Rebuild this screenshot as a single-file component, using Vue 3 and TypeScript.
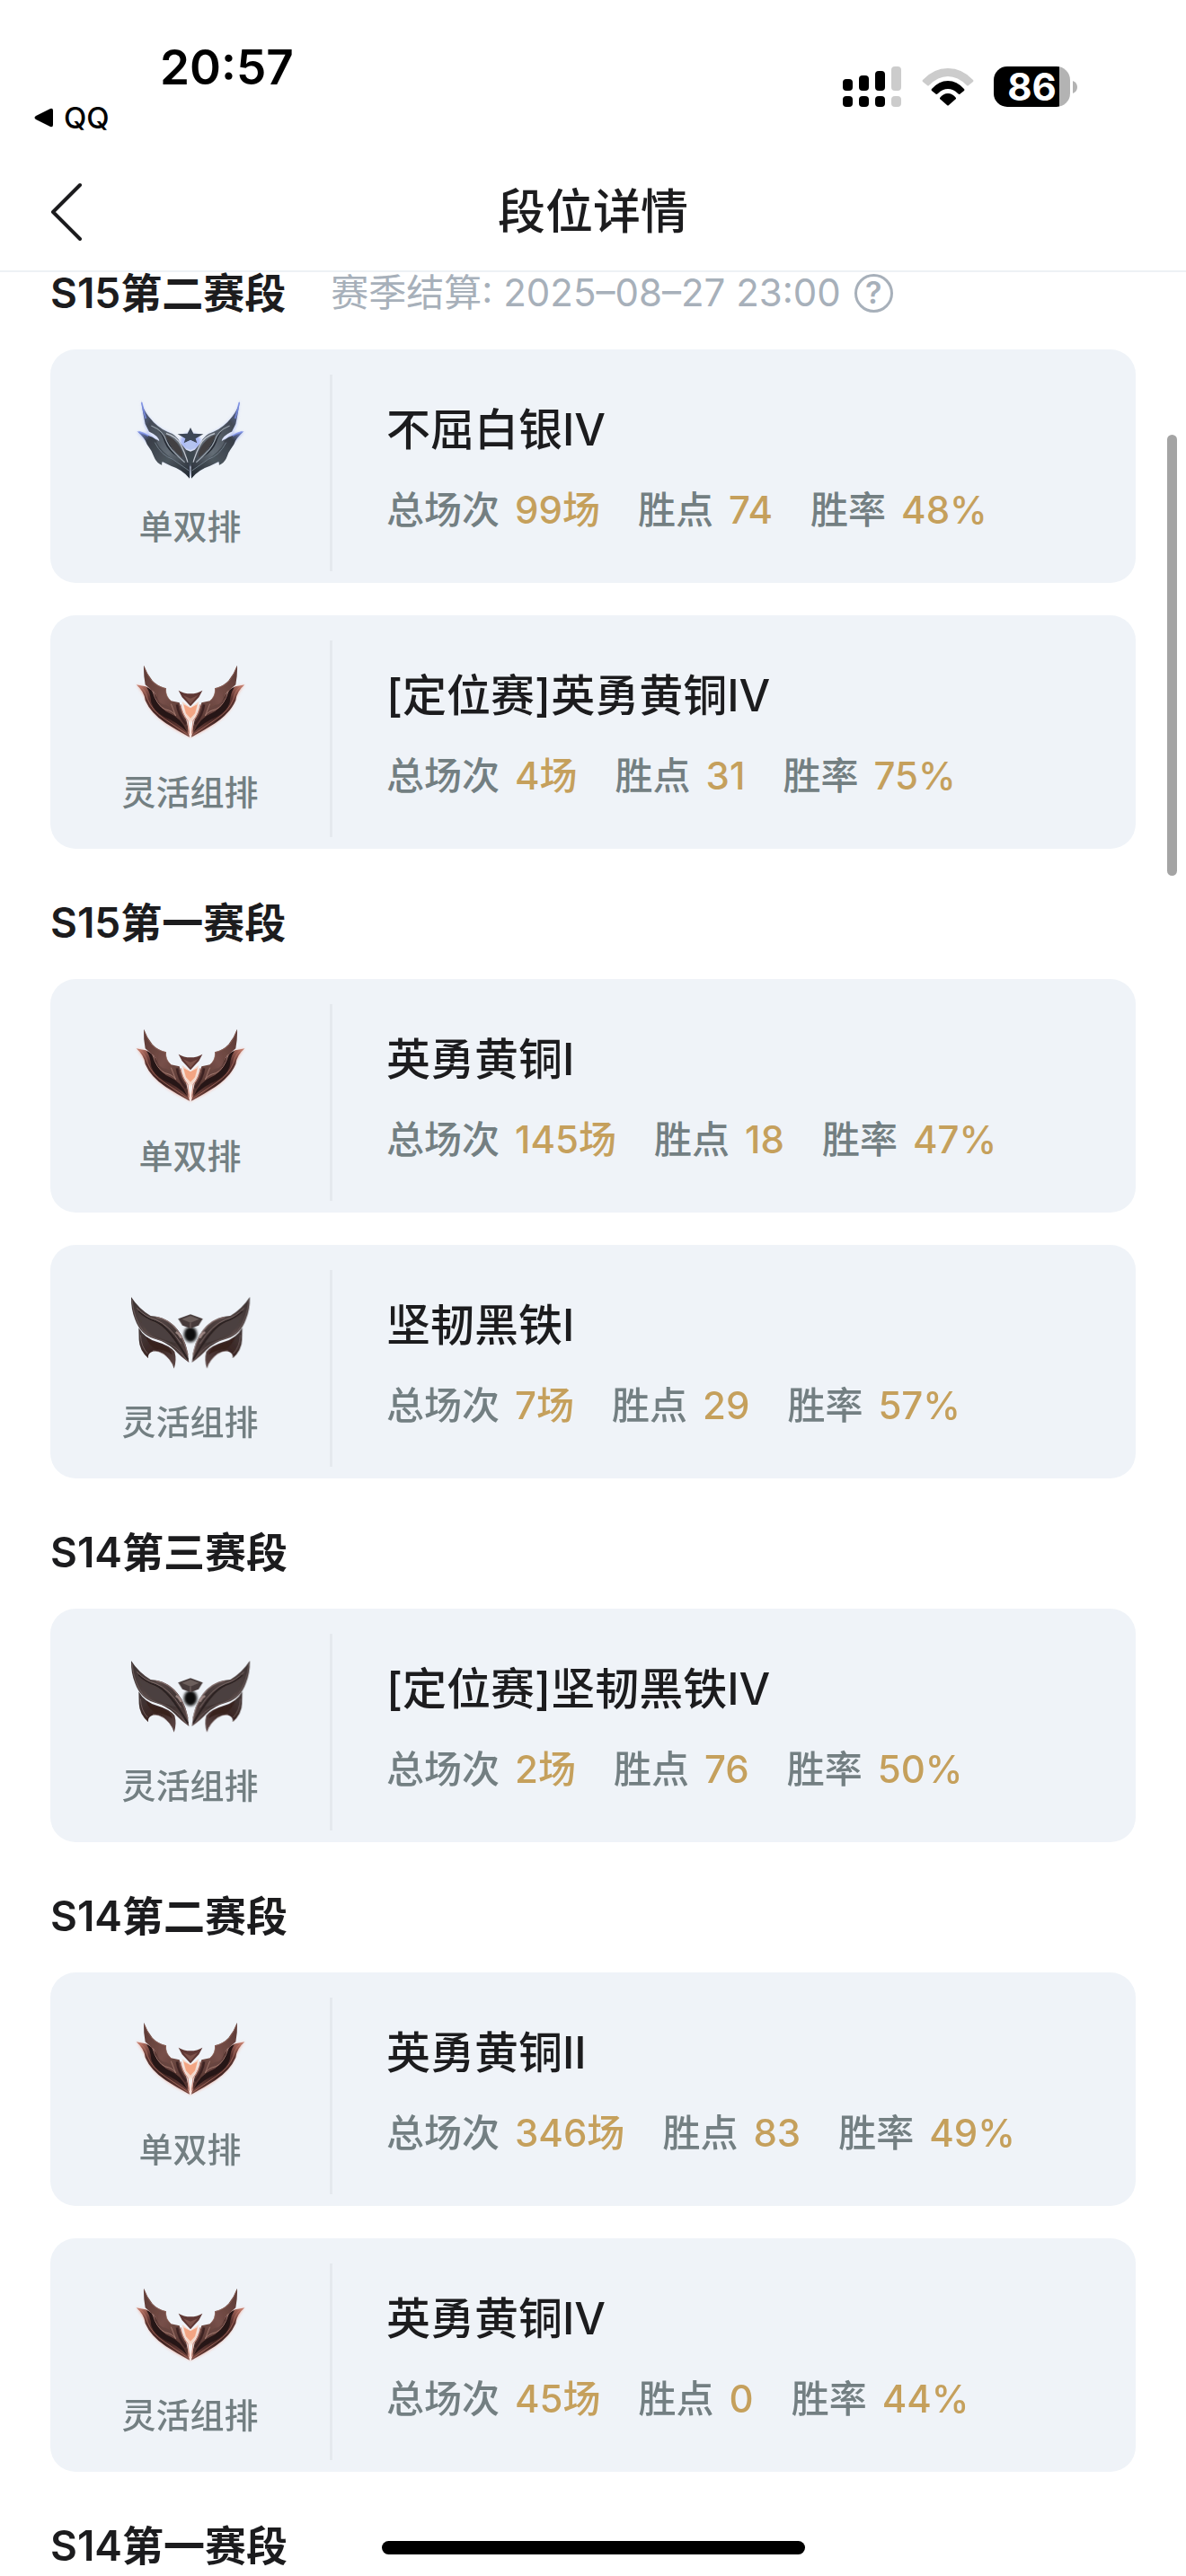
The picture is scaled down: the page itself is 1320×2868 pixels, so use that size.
<script setup lang="ts">
type Tier = 'silver' | 'bronze' | 'iron'

interface RankRecord {
  tier: Tier
  queue: string
  rank: string
  games: number
  points: number
  winRate: number
}

interface Season {
  name: string
  settledAt?: string
  records: RankRecord[]
}

const SOLO = '单双排'
const FLEX = '灵活组排'

const seasons: Season[] = [
  {
    name: 'S15第二赛段',
    settledAt: '2025–08–27 23:00',
    records: [
      { tier: 'silver', queue: SOLO, rank: '不屈白银IV', games: 99, points: 74, winRate: 48 },
      { tier: 'bronze', queue: FLEX, rank: '[定位赛]英勇黄铜IV', games: 4, points: 31, winRate: 75 },
    ],
  },
  {
    name: 'S15第一赛段',
    records: [
      { tier: 'bronze', queue: SOLO, rank: '英勇黄铜I', games: 145, points: 18, winRate: 47 },
      { tier: 'iron', queue: FLEX, rank: '坚韧黑铁I', games: 7, points: 29, winRate: 57 },
    ],
  },
  {
    name: 'S14第三赛段',
    records: [
      { tier: 'iron', queue: FLEX, rank: '[定位赛]坚韧黑铁IV', games: 2, points: 76, winRate: 50 },
    ],
  },
  {
    name: 'S14第二赛段',
    records: [
      { tier: 'bronze', queue: SOLO, rank: '英勇黄铜II', games: 346, points: 83, winRate: 49 },
      { tier: 'bronze', queue: FLEX, rank: '英勇黄铜IV', games: 45, points: 0, winRate: 44 },
    ],
  },
  { name: 'S14第一赛段', records: [] },
]
</script>

<template>
  <div class="page">
    <!-- Emblem artwork: each half is drawn once and mirrored -->
    <svg class="defs" width="0" height="0" aria-hidden="true">
      <defs>
        <filter id="soft" x="-10%" y="-10%" width="120%" height="120%"><feGaussianBlur stdDeviation="1.8" /></filter>
        <filter id="glow" x="-30%" y="-30%" width="160%" height="160%"><feGaussianBlur stdDeviation="5" /></filter>
        <linearGradient id="silver-wing" x1="0" y1="0" x2="1" y2="1">
          <stop offset="0" stop-color="#6878b8" /><stop offset="0.25" stop-color="#434a56" />
          <stop offset="0.65" stop-color="#646d76" /><stop offset="1" stop-color="#2a3039" />
        </linearGradient>
        <linearGradient id="silver-lower" x1="0" y1="0" x2="1" y2="1">
          <stop offset="0" stop-color="#7f93e6" /><stop offset="0.2" stop-color="#383e48" />
          <stop offset="0.6" stop-color="#4c555d" /><stop offset="1" stop-color="#20262f" />
        </linearGradient>
        <linearGradient id="bronze-wing" x1="0" y1="0" x2="1" y2="1">
          <stop offset="0" stop-color="#5a3733" /><stop offset="0.45" stop-color="#775049" />
          <stop offset="1" stop-color="#4c2e2a" />
        </linearGradient>
        <linearGradient id="bronze-lower" x1="0" y1="0" x2="1" y2="1">
          <stop offset="0" stop-color="#cf8473" /><stop offset="0.25" stop-color="#5c3430" />
          <stop offset="0.6" stop-color="#422523" /><stop offset="1" stop-color="#74453e" />
        </linearGradient>
        <linearGradient id="iron-wing" x1="0" y1="0" x2="1" y2="1">
          <stop offset="0" stop-color="#3b3131" /><stop offset="0.4" stop-color="#544645" />
          <stop offset="0.7" stop-color="#3f3332" /><stop offset="1" stop-color="#5f4b4a" />
        </linearGradient>
        <linearGradient id="iron-lower" x1="0" y1="0" x2="1" y2="1">
          <stop offset="0" stop-color="#453b3b" /><stop offset="0.5" stop-color="#3a2522" />
          <stop offset="1" stop-color="#5e4847" />
        </linearGradient>

        <g id="silver-half">
          <path d="M84 48Q94 84 112 106Q140 140 175 154Q200 164 214 190L249 240L249 300L200 266L150 250L120 208L70 152L108 156L96 130Z" fill="#8fa2f0" opacity=".5" filter="url(#glow)" />
          <path d="M70 150Q98 160 122 170L146 186L190 236L249 276L246 308Q222 278 184 266L155 252Q152 262 154 264Q136 256 129 240Q120 214 104 194Q98 174 70 150Z" fill="url(#silver-lower)" />
          <path d="M84 48Q92 80 110 102Q138 138 172 152Q204 162 214 188L246 226L249 282Q226 262 196 246Q154 222 136 188Q142 174 112 154Q104 138 98 126Q90 90 84 48Z" fill="url(#silver-wing)" />
          <path d="M134 142Q154 158 162 186Q174 218 206 236Q190 212 178 190Q164 160 134 142Z" fill="#252b34" />
          <path d="M164 162Q196 172 214 204Q226 226 222 238Q198 222 184 200Q174 184 164 162Z" fill="#423f42" />
          <path d="M118 132Q158 148 170 186Q180 212 230 254" fill="none" stroke="#98a1ab" stroke-width="4" />
          <path d="M168 158Q204 168 218 198Q230 222 240 254" fill="none" stroke="#c3c8d1" stroke-width="4" />
          <path d="M106 154Q120 166 145 184Q143 166 112 152Z" fill="#dde4fb" />
          <path d="M130 188Q152 232 190 244L244 282" fill="none" stroke="#6f7b87" stroke-width="3" />
          <path d="M86 54Q92 84 100 108M76 152Q96 158 108 166" fill="none" stroke="#7b8eea" stroke-width="5" opacity=".8" />
        </g>

        <g id="bronze-half">
          <path d="M70 112L92 118L120 130L160 200L249 262L249 288Q188 262 148 228Q108 196 94 150Z" fill="#ee9c88" opacity=".6" filter="url(#glow)" />
          <path d="M68 112Q88 116 100 118Q120 126 136 150L162 190L206 212L236 250L246 287Q206 266 166 240Q116 206 98 164Q94 134 68 112Z" fill="url(#bronze-lower)" />
          <path d="M93 47Q104 76 122 98Q138 116 168 124Q164 148 184 166L212 172Q218 194 234 224L246 276Q222 238 192 218L158 196Q142 170 128 138L98 112Q92 82 93 47Z" fill="url(#bronze-wing)" />
          <path d="M102 120Q126 128 138 166Q148 194 180 208Q216 222 238 270Q204 236 160 218Q128 202 118 172Q116 140 102 120Z" fill="#281516" />
          <path d="M142 128Q132 164 156 178Q180 178 196 212Q184 206 166 196Q144 184 136 154Z" fill="#684540" />
          <path d="M122 132Q138 184 164 194Q192 200 200 216L184 176" fill="none" stroke="#a1776d" stroke-width="3" />
          <path d="M95 54Q108 90 130 110Q148 120 166 125Q166 154 186 168" fill="none" stroke="#94695f" stroke-width="2" />
          <path d="M76 116Q98 126 106 160Q120 198 162 226L242 280" fill="none" stroke="#c98070" stroke-width="3" opacity=".6" />
          <path d="M217 178Q220 208 240 232L244 276" fill="none" stroke="#cf9688" stroke-width="4" />
          <path d="M204 178Q208 212 234 244" fill="none" stroke="#3e2423" stroke-width="8" />
        </g>

        <g id="iron-half">
          <path d="M76 160Q96 196 140 208Q180 220 196 240Q204 268 194 296Q184 264 158 246Q134 232 116 242Q106 248 108 262Q78 234 77 200Z" fill="url(#iron-lower)" />
          <path d="M100 190Q130 216 170 224Q184 232 188 250Q162 230 132 230Q112 222 100 190Z" fill="#37201d" />
          <path d="M82 184Q84 224 106 246M124 236Q164 238 192 284" fill="none" stroke="#8c7877" stroke-width="3" opacity=".6" />
          <path d="M51 57Q76 96 116 120Q170 122 206 166Q238 204 244 276Q214 254 196 234Q170 208 126 196Q82 182 64 132Q50 98 51 57Z" fill="url(#iron-wing)" />
          <path d="M76 116Q102 132 126 142Q170 156 202 212Q178 208 138 190Q94 174 76 116Z" fill="#4c403f" />
          <path d="M76 104Q100 128 132 138Q178 156 240 266" fill="none" stroke="#2b2020" stroke-width="6" />
          <path d="M70 94Q98 124 132 133Q178 150 218 214" fill="none" stroke="#7a6866" stroke-width="3" />
          <path d="M134 124Q180 132 206 170Q230 202 240 250" fill="none" stroke="#806b69" stroke-width="4" />
          <path d="M54 66Q60 132 92 172Q120 194 160 204Q204 222 238 268" fill="none" stroke="#776665" stroke-width="3" opacity=".7" />
          <path d="M200 174Q212 180 218 194" fill="none" stroke="#d0b6b0" stroke-width="7" opacity=".6" />
        </g>

        <symbol id="emblem-silver" viewBox="9 -3 480 360">
          <g filter="url(#soft)">
            <ellipse cx="249" cy="184" rx="34" ry="28" fill="#a9b8f6" filter="url(#glow)" />
            <use href="#silver-half" />
            <use href="#silver-half" transform="translate(498 0) scale(-1 1)" />
            <path d="M249 138L259 158L292 160L266 175L271 190L249 180L227 190L232 175L206 160L239 158Z" fill="#3d4656" />
            <path d="M229 190L249 180L269 190L262 206L249 213L236 206Z" fill="#b4c3f0" />
            <path d="M234 212L249 218L264 212L257 250L249 268L241 250Z" fill="#3e4750" />
            <path d="M249 268V306" stroke="#dce4f3" stroke-width="3" />
          </g>
        </symbol>

        <symbol id="emblem-bronze" viewBox="9 0 480 360">
          <g filter="url(#soft)">
            <use href="#bronze-half" />
            <use href="#bronze-half" transform="translate(498 0) scale(-1 1)" />
            <path d="M221 168L249 188L277 168L270 206L249 242L228 206Z" fill="#f6d8ca" />
            <path d="M226 178L249 190L272 178L264 208L249 224L234 208Z" fill="#f3a583" />
            <path d="M209 131Q226 142 249 142Q272 142 289 131L277 154L249 184L221 154Z" fill="#5f3834" />
            <path d="M225 148L249 158L273 148L249 176Z" fill="#7d524b" />
            <path d="M249 230V286" stroke="#fdeee8" stroke-width="4" />
          </g>
        </symbol>

        <symbol id="emblem-iron" viewBox="9 3 480 360">
          <g filter="url(#soft)">
            <ellipse cx="249" cy="182" rx="22" ry="26" fill="#0b0b0d" filter="url(#glow)" />
            <use href="#iron-half" />
            <use href="#iron-half" transform="translate(498 0) scale(-1 1)" />
            <path d="M208 130L249 115L290 130L276 152L249 162L222 152Z" fill="#463b3a" />
            <path d="M220 131L249 120L278 131L249 143Z" fill="#6c5e5c" />
            <path d="M249 143V161" stroke="#7c6d6b" stroke-width="3" />
          </g>
        </symbol>
      </defs>
    </svg>

    <header class="header">
      <div class="status">
        <div class="status-left">
          <time class="clock">20:57</time>
          <a class="return" href="#">
            <svg width="21" height="22" viewBox="0 0 21 22" aria-hidden="true"><path d="M2 9L18 1Q21 0 21 3V19Q21 22 18 21L2 13Q-1 11 2 9Z" /></svg>
            QQ
          </a>
        </div>
        <div class="status-right">
          <svg width="65" height="45" viewBox="0 0 65 45" aria-hidden="true">
            <rect x="0" y="14" width="11" height="13" rx="4" /><rect x="18" y="10" width="11" height="17" rx="4" />
            <rect x="36" y="5" width="11" height="22" rx="4" /><rect x="54" y="0" width="11" height="27" rx="4" fill="#ccc" />
            <rect x="0" y="33" width="11" height="12" rx="4" /><rect x="18" y="33" width="11" height="12" rx="4" />
            <rect x="36" y="33" width="11" height="12" rx="4" /><rect x="54" y="33" width="11" height="12" rx="4" fill="#ccc" />
          </svg>
          <svg class="wifi" width="58" height="43" viewBox="0 0 58 43" aria-hidden="true">
            <path d="M1 14Q13 1 29 1Q45 1 57 14Q58 15 57 16L52 20Q51 21 50 20Q40 10 29 10Q18 10 8 20Q7 21 6 20L1 16Q0 15 1 14Z" fill="#ccc" />
            <path d="M11 24Q19 15 29 15Q39 15 47 24Q48 25 47 26L42 30Q41 30 40 29Q35 24 29 24Q23 24 18 29Q17 30 16 30L11 26Q10 25 11 24Z" />
            <path d="M20 34Q24 29 29 29Q34 29 38 34Q38 35 38 35L30 42Q29 43 28 42L20 35Q20 35 20 34Z" />
          </svg>
          <div class="battery"><span class="battery-level">86</span></div>
          <svg class="tip" width="5" height="14" viewBox="0 0 5 14" aria-hidden="true"><path d="M0 0Q5 2 5 7Q5 12 0 14Z" fill="#b3b3b3" /></svg>
        </div>
      </div>
      <nav class="nav">
        <button class="back" type="button" aria-label="返回">
          <svg width="36" height="66" viewBox="0 0 36 66" fill="none" stroke="#1c1c1e" stroke-width="4" stroke-linecap="round" stroke-linejoin="round" aria-hidden="true"><path d="M33 3L3 33L33 63" /></svg>
        </button>
        <h1 class="title">段位详情</h1>
      </nav>
    </header>

    <main class="content">
      <section v-for="season in seasons" :key="season.name" class="season">
        <div class="season-head">
          <h2 class="season-name">{{ season.name }}</h2>
          <p v-if="season.settledAt" class="settled">
            赛季结算: {{ season.settledAt }}
            <button class="help" type="button" aria-label="说明">?</button>
          </p>
        </div>
        <article v-for="record in season.records" :key="record.queue" class="card">
          <div class="queue">
            <svg class="emblem" width="160" height="120" aria-hidden="true"><use :href="`#emblem-${record.tier}`" /></svg>
            <span class="queue-name">{{ record.queue }}</span>
          </div>
          <div class="detail">
            <h3 class="rank">{{ record.rank }}</h3>
            <dl class="stats">
              <div class="stat"><dt>总场次</dt><dd>{{ record.games }}场</dd></div>
              <div class="stat"><dt>胜点</dt><dd>{{ record.points }}</dd></div>
              <div class="stat"><dt>胜率</dt><dd>{{ record.winRate }}%</dd></div>
            </dl>
          </div>
        </article>
      </section>
    </main>

    <div class="scroll-thumb" aria-hidden="true"></div>
    <div class="home-indicator" aria-hidden="true"></div>
  </div>
</template>

<style>
body {
  background: #fff;
}
</style>

<style scoped>
.page {
  position: relative;
  min-height: 100vh;
  overflow: hidden;
  color: #1c1c1e;
  font-family: Inter, "Noto Sans CJK SC", sans-serif;
}
.defs {
  position: absolute;
}
h1, h2, h3, p, dl, dd {
  margin: 0;
}
button {
  padding: 0;
  border: 0;
  background: none;
  color: inherit;
  font: inherit;
}
.header {
  border-bottom: 2px solid #edf1f5;
}
.status {
  display: flex;
  justify-content: space-between;
  height: 170px;
  box-sizing: border-box;
  padding: 45px 121px 0 38px;
  color: #000;
}
.status-left {
  display: flex;
  flex-direction: column;
  gap: 8px;
}
.clock {
  padding-left: 140px;
  font-size: 53px;
  font-weight: 600;
  line-height: 60px;
}
.return {
  display: flex;
  align-items: center;
  gap: 12px;
  color: #000;
  font-size: 33px;
  font-weight: 500;
  line-height: 36px;
  text-decoration: none;
}
.status-right {
  display: flex;
  align-items: center;
  height: 45px;
  padding-top: 29px;
}
.wifi {
  margin: 0 22px 0 23px;
}
.battery {
  display: flex;
  justify-content: center;
  width: 85px;
  height: 45px;
  border-radius: 15px;
  background: linear-gradient(to right, #000 73px, #b3b3b3 73px);
}
.battery-level {
  color: #fff;
  font-size: 42px;
  font-weight: 700;
  line-height: 45px;
}
.tip {
  margin-left: 3px;
}
.nav {
  display: grid;
  grid-template-columns: 1fr auto 1fr;
  align-items: center;
  height: 131px;
  padding: 0 56px;
}
.back {
  display: flex;
  justify-self: start;
}
.title {
  font-size: 53px;
  font-weight: 500;
  line-height: 60px;
}
.content {
  padding: 0 56px;
}
.season {
  display: flex;
  flex-direction: column;
  gap: 36px;
}
.season + .season {
  margin-top: 59px;
}
.season-head {
  display: flex;
  align-items: center;
  gap: 50px;
  height: 46px;
  margin-bottom: 4px;
}
.season-name {
  font-size: 46px;
  font-weight: 600;
  line-height: 46px;
}
.settled {
  display: flex;
  align-items: center;
  gap: 15px;
  color: #a7b0ba;
  font-size: 42px;
  line-height: 46px;
}
.help {
  box-sizing: border-box;
  width: 43px;
  height: 43px;
  border: 3px solid #a7b0ba;
  border-radius: 50%;
  font-size: 34px;
  font-weight: 600;
  line-height: 36px;
  text-align: center;
}
.card {
  display: flex;
  box-sizing: border-box;
  height: 260px;
  padding: 28px 0 13px;
  border-radius: 28px;
  background: #eff3f8;
}
.queue {
  display: flex;
  flex-direction: column;
  align-items: center;
  width: 311px;
  border-right: 3px solid #e5e9ee;
}
.emblem {
  margin-top: 12px;
}
.queue-name {
  margin-top: 17px;
  color: #737f82;
  font-size: 38px;
  font-weight: 500;
  line-height: 40px;
}
.detail {
  display: flex;
  flex-direction: column;
  gap: 34px;
  padding: 32px 0 0 60px;
}
.rank {
  font-size: 49px;
  font-weight: 500;
  line-height: 60px;
}
.stats {
  display: flex;
  gap: 42px;
  font-size: 42px;
  font-weight: 500;
  line-height: 50px;
}
.stat {
  display: flex;
  gap: 17px;
}
dt {
  color: #737f82;
}
dd {
  color: #c5a05c;
}
.scroll-thumb {
  position: absolute;
  top: 484px;
  right: 10px;
  width: 11px;
  height: 491px;
  border-radius: 6px;
  background: #a4a4a4;
}
.home-indicator {
  position: fixed;
  bottom: 24px;
  left: 50%;
  width: 471px;
  height: 15px;
  margin-left: -235px;
  border-radius: 8px;
  background: #000;
}
</style>
